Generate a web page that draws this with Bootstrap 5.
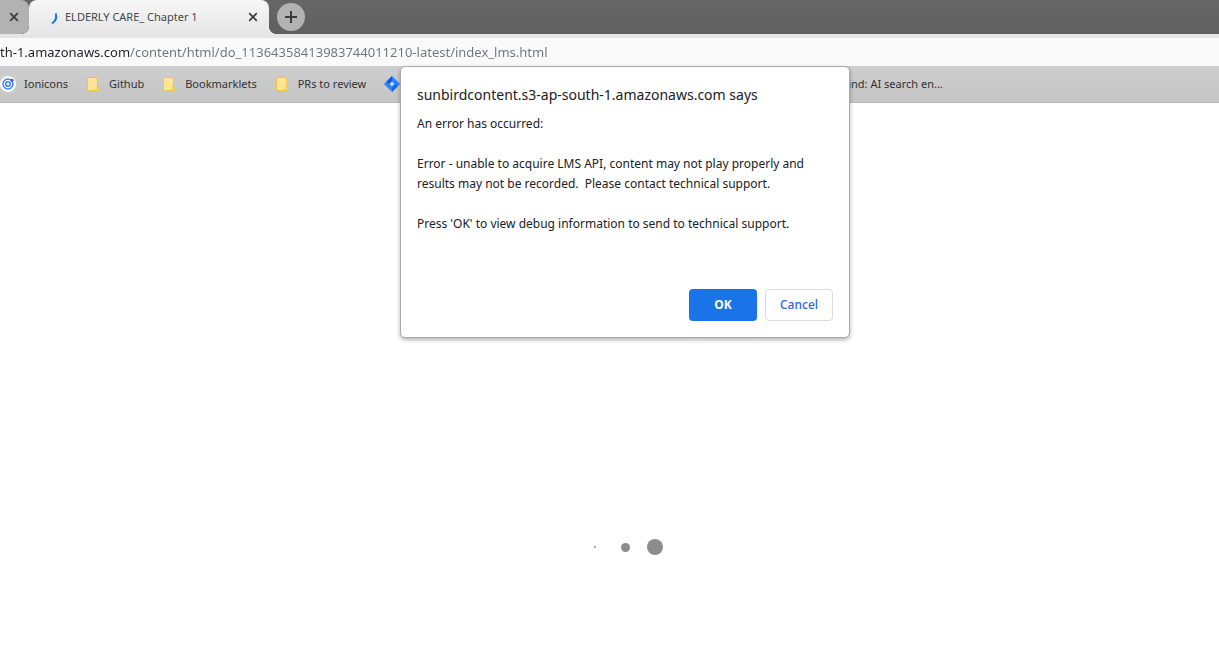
<!DOCTYPE html>
<html lang="en">
<head>
<meta charset="utf-8">
<meta name="viewport" content="width=device-width, initial-scale=1">
<title>ELDERLY CARE_ Chapter 1</title>
<link href="https://cdn.jsdelivr.net/npm/bootstrap@5.3.0/dist/css/bootstrap.min.css" rel="stylesheet">
<style>
  body { font-family: "Noto Sans", "Open Sans", sans-serif; font-size: 11px; line-height: 20px; color: #202124; }
  svg { display: block; flex: none; }
  .tab-strip { height: 34px; background: linear-gradient(#666, #606060); }
  .strip-button { border: 0; padding: 0; background: none; color: #3c4043; }
  .tab-previous { width: 29px; background: #b2b2b2; border-radius: 0 8px 8px 0; padding-left: 9px; }
  .tab-current { width: 240px; background: linear-gradient(#f7f7f7, #e6e6e6); border-radius: 8px 8px 0 0; padding: 0 11px 0 18px; color: #45484c; }
  .tab-current::before, .tab-current::after { content: ""; position: absolute; bottom: 0; width: 8px; height: 8px; }
  .tab-current::before { right: 100%; background: radial-gradient(circle at 0 0, transparent 8px, #e6e6e6 8px); }
  .tab-current::after { left: 100%; background: radial-gradient(circle at 100% 0, transparent 8px, #e6e6e6 8px); }
  .new-tab { width: 28px; height: 28px; margin-left: 8px; background: #b2b2b2; border-radius: 50%; }
  .address-bar { border-top: 4px solid #e5e5e5; background: #fafafa; height: 32px; }
  .address-field {
    width: 100%; height: 28px; border: 0; padding: 0; outline: 0; font-size: 13px;
    color: #707478; -webkit-text-fill-color: transparent;
    background: linear-gradient(90deg, #202124 129px, #707478 129px);
    -webkit-background-clip: text; background-clip: text;
  }
  .bookmarks { height: 37px; background: linear-gradient(#cecece, #c5c5c5); border-bottom: 1px solid #b9b9b9; }
  .bookmarks a { color: #303134; text-decoration: none; white-space: nowrap; }
  .folder { margin-left: 18px; gap: 9px; }
  .covered { width: 464px; margin-left: 18px; }
  .overlay-row { top: 66px; left: 31px; right: 0; }
  .alert-box { width: 450px; background: #fff; border: 1px solid #a9a9a9; border-radius: 5px; padding: 17px 16px 16px; box-shadow: 0 2px 4px rgba(0,0,0,.3); font-size: 12px; }
  .alert-box h1 { font-size: 14px; line-height: 22px; margin: 0 0 8px; font-weight: 400; }
  .alert-box p { margin: 0 0 20px; }
  .actions { margin-top: 55px; }
  .action { width: 68px; height: 32px; font-size: 12px; line-height: 20px; padding: 0; border-radius: 4px; }
  .action-ok { background: #1a73e8; color: #fff; font-weight: 700; }
  .action-cancel { background: #fff; border-color: #dadce0; color: #2b66d9; font-weight: 500; }
  .page-area { padding-left: 31px; padding-top: 324px; }
  .loader { height: 240px; }
  .loader-cell { width: 30px; }
  .loader-dot { border-radius: 50%; background: #8c8c8c; }
  .dot-s { width: 2px; height: 2px; }
  .dot-m { width: 9px; height: 9px; }
  .dot-l { width: 16px; height: 16px; }
</style>
</head>
<body class="bg-white vh-100 overflow-hidden position-relative">
<svg width="0" height="0" class="position-absolute" aria-hidden="true">
  <symbol id="folder" viewBox="0 0 14 16"><path d="M1.500 1.500h10v13h-10z" fill="#ffe593" stroke="#eec54c"/><path d="M10 11h2.500v3.500H10z" fill="#ffe27c" stroke="#eec54c"/></symbol>
  <symbol id="cross" viewBox="0 0 10 10"><path d="M1.200 1.200l7.600 7.600M8.800 1.200L1.200 8.800" stroke="#3c3c3c" stroke-width="1.700"/></symbol>
</svg>
<header>
  <div class="tab-strip d-flex align-items-center">
    <div class="tab-previous h-100 d-flex align-items-center">
      <button class="strip-button" aria-label="Close previous tab"><svg width="10" height="10"><use href="#cross"/></svg></button>
    </div>
    <div class="tab-current h-100 d-flex align-items-center position-relative">
      <svg width="18" height="16" viewBox="0 0 18 16"><path d="M8.800 4.500C9.900 8.500 8.700 12 5 14.500" fill="none" stroke="#1a73e8" stroke-width="2"/></svg>
      <span class="flex-grow-1 text-nowrap">ELDERLY CARE_ Chapter 1</span>
      <button class="strip-button" aria-label="Close tab"><svg width="10" height="10"><use href="#cross"/></svg></button>
    </div>
    <button class="strip-button new-tab d-flex align-items-center justify-content-center" aria-label="New tab">
      <svg width="12" height="12" viewBox="0 0 12 12"><path d="M6 0v12M0 6h12" stroke="#3c3c3c" stroke-width="2"/></svg>
    </button>
  </div>
  <div class="address-bar">
    <input class="address-field d-block" type="text" aria-label="Address" value="th-1.amazonaws.com/content/html/do_11364358413983744011210-latest/index_lms.html">
  </div>
  <nav class="bookmarks d-flex align-items-center" aria-label="Bookmarks">
    <a href="#" class="d-flex align-items-center gap-2">
      <svg width="16" height="16" viewBox="0 0 16 16"><circle cx="8" cy="8" r="8" fill="#fff"/><circle cx="8" cy="8" r="5" fill="none" stroke="#3880ff" stroke-width="1.400"/><circle cx="8" cy="8" r="2.400" fill="#c9ecff" stroke="#3880ff" stroke-width="1.400"/><circle cx="12" cy="4.300" r="1.500" fill="#3455ff"/></svg>Ionicons</a>
    <a href="#" class="folder d-flex align-items-center"><svg width="14" height="16"><use href="#folder"/></svg>Github</a>
    <a href="#" class="folder d-flex align-items-center"><svg width="14" height="16"><use href="#folder"/></svg>Bookmarklets</a>
    <a href="#" class="folder d-flex align-items-center"><svg width="14" height="16"><use href="#folder"/></svg>PRs to review</a>
    <a href="#" class="covered" aria-label="Board"><svg width="16" height="16" viewBox="0 0 16 16"><path d="M8 0l8 8-8 8-8-8z" fill="#2684ff"/><path d="M8 0v5L5 8 2.500 5.500z" fill="#0b5cd5"/><path d="M8 16v-5l3-3 2.500 2.500z" fill="#1768e0"/><path d="M8 5.500l2.500 2.500L8 10.500 5.500 8z" fill="#c8d4e4"/></svg></a>
    <a href="#">ind: AI search en...</a>
  </nav>
</header>
<main class="page-area">
  <div class="loader d-flex align-items-center justify-content-center" role="status" aria-label="Loading">
    <div class="loader-cell d-flex justify-content-center"><span class="loader-dot dot-s"></span></div>
    <div class="loader-cell d-flex justify-content-center"><span class="loader-dot dot-m"></span></div>
    <div class="loader-cell d-flex justify-content-center"><span class="loader-dot dot-l"></span></div>
  </div>
</main>
<section class="overlay-row position-absolute d-flex justify-content-center">
  <div class="alert-box" role="dialog" aria-labelledby="dialog-title">
    <h1 id="dialog-title">sunbirdcontent.s3-ap-south-1.amazonaws.com says</h1>
    <p>An error has occurred:</p>
    <p>Error - unable to acquire LMS API, content may not play properly and<br>results may not be recorded.&nbsp; Please contact technical support.</p>
    <p>Press 'OK' to view debug information to send to technical support.</p>
    <div class="actions d-flex justify-content-end gap-2">
      <button class="btn action action-ok">OK</button>
      <button class="btn action action-cancel">Cancel</button>
    </div>
  </div>
</section>
<script src="https://cdn.jsdelivr.net/npm/bootstrap@5.3.0/dist/js/bootstrap.bundle.min.js"></script>
</body>
</html>
